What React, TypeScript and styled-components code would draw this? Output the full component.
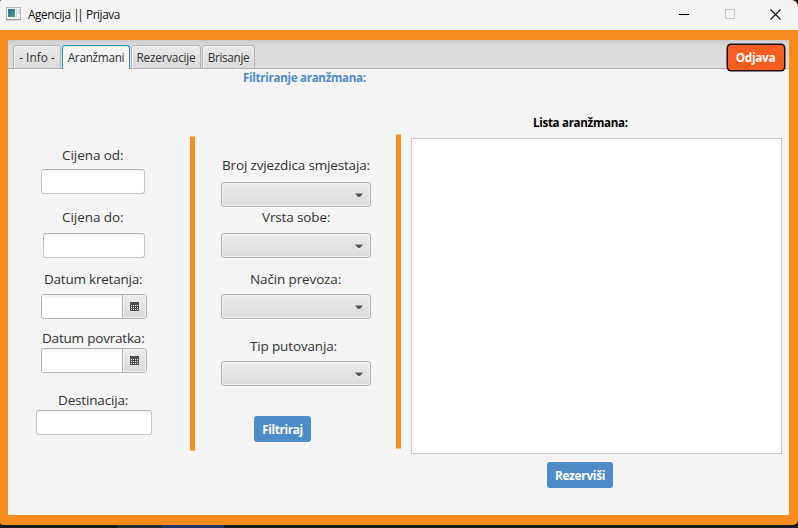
import React from "react";
import styled, { createGlobalStyle } from "styled-components";

const ORANGE = "#f78d1e";
const PANEL = "#f4f4f4";
const BLUE = "#4e8bc9";

const GlobalStyle = createGlobalStyle`
  * { box-sizing: border-box; }
  body { margin: 0; background: #17191f; }
  button { margin: 0; padding: 0; border: 0; font: inherit; }
`;

const Desktop = styled.div`
  width: 798px;
  height: 528px;
  overflow: hidden;
  background: linear-gradient(90deg, #17191f 0 117px, #252a33 117px 162px, #1f3563 162px 224px, #17191f 224px);
  font-family: "Open Sans", "Noto Sans", sans-serif;
`;

const Window = styled.div`
  display: flex;
  flex-direction: column;
  width: 798px;
  height: 525px;
  overflow: hidden;
  border-radius: 2px 7px 5px 3px;
  background: ${ORANGE};
`;

const TitleBar = styled.header`
  display: flex;
  align-items: center;
  flex: none;
  height: 30px;
  padding: 0 0 2px 6px;
  background: #f3f3f3;
`;

const Title = styled.h1`
  flex: 1;
  margin: 0 0 0 7px;
  color: #111;
  font-size: 11.8px;
  font-weight: 400;
  line-height: 18px;
  letter-spacing: -0.42px;
`;

const Bars = styled.span`
  letter-spacing: -2.4px;
  margin-right: 2px;
`;

const WindowControls = styled.div`
  display: flex;
`;

const ControlButton = styled.button`
  display: flex;
  align-items: center;
  justify-content: center;
  width: 46px;
  height: 28px;
  background: transparent;

  &:last-child {
    width: 45px;
  }
`;

const Client = styled.main`
  position: relative;
  display: flex;
  flex-direction: column;
  width: 781px;
  height: 475px;
  margin: 10px 0 0 8px;
  background: ${PANEL};
`;

const TabHeader = styled.nav`
  display: flex;
  align-items: flex-end;
  flex: none;
  gap: 1px;
  height: 29px;
  padding-left: 5px;
  background: linear-gradient(#cbcbcb 0, #dadada 5px, #dedede 100%);
  box-shadow: inset 0 -1px #b4b4b4;
`;

const Tab = styled.button<{ $width: number; $spacing: number; $active?: boolean }>`
  width: ${(p) => p.$width}px;
  height: 24px;
  border: 1px solid ${(p) => (p.$active ? "#159bc6" : "#b4b4b4")};
  border-bottom: ${(p) => (p.$active ? "0" : "1px solid #b4b4b4")};
  border-radius: 3px 3px 0 0;
  background: ${(p) => (p.$active ? PANEL : "linear-gradient(#eaeaea, #dadada)")};
  box-shadow: ${(p) => (p.$active ? "inset 0 1px #d5eaf1" : "inset 1px 1px #f4f4f4")};
  padding-bottom: ${(p) => (p.$active ? 1 : 0)}px;
  color: #333;
  font-size: 11.8px;
  line-height: 20px;
  letter-spacing: ${(p) => p.$spacing}px;
  white-space: nowrap;
`;

const LogoutButton = styled.button`
  position: absolute;
  top: 4px;
  right: 4px;
  width: 58px;
  height: 27px;
  border: 1px solid #1c0d08;
  border-radius: 4px;
  background: #f75c20;
  box-shadow: 0 0 0 0.5px #1c0d08;
  padding: 0 1px 1px 0;
  color: #fff;
  font-size: 11.8px;
  font-weight: 700;
  letter-spacing: -0.33px;
`;

const Content = styled.section`
  display: grid;
  grid-template-columns: 182px 5px 201px 5px 1fr;
  grid-template-rows: 18px 1fr;
  align-items: start;
  height: 446px;
`;

const FilterHeading = styled.h2`
  grid-column: 1 / 5;
  height: 18px;
  margin: 0 0 0 235px;
  color: ${BLUE};
  font-size: 11.6px;
  line-height: 17px;
  letter-spacing: -0.3px;
  white-space: nowrap;
`;

const Column = styled.div<{ $indent: number }>`
  grid-row: 2;
  display: flex;
  flex-direction: column;
  align-items: flex-start;
  padding-left: ${(p) => p.$indent}px;
`;

const Divider = styled.div<{ $top: number }>`
  grid-row: 2;
  height: 315px;
  margin-top: ${(p) => p.$top}px;
  background: linear-gradient(#f8ba78 1px, ${ORANGE} 1px 314px, #f8ba78 314px);
`;

const Label = styled.label<{ $x: number; $gap: number; $spacing: number }>`
  height: 20px;
  margin: ${(p) => p.$gap}px 0 0 ${(p) => p.$x}px;
  color: #333;
  font-size: 13.5px;
  line-height: 20px;
  letter-spacing: ${(p) => p.$spacing}px;
  white-space: nowrap;
`;

const TextInput = styled.input<{ $x: number; $gap: number; $width: number }>`
  width: ${(p) => p.$width}px;
  height: 25px;
  margin: ${(p) => p.$gap}px 0 1px ${(p) => p.$x}px;
  padding: 0 7px;
  border: 1px solid #c5c5c5;
  border-top-color: #b6b6b6;
  border-radius: 3px;
  background: linear-gradient(#f0f0f0, #fff 4px);
  outline: none;
`;

const DateField = styled.div<{ $gap: number }>`
  display: flex;
  width: 106px;
  height: 25px;
  margin: ${(p) => p.$gap}px 0 0 5px;
  border: 1px solid #b4b4b4;
  border-radius: 3px;
  overflow: hidden;
`;

const DateInput = styled.input`
  width: 80px;
  height: 23px;
  padding: 0 6px;
  border: 0;
  background: linear-gradient(#f0f0f0, #fff 4px);
  outline: none;
`;

const CalendarButton = styled.button`
  display: flex;
  align-items: center;
  justify-content: center;
  flex: 1;
  border-left: 1px solid #b4b4b4;
  background: linear-gradient(#ececec, #d9d9d9);
  box-shadow: inset 0 0 0 1px #f0f0f0;
`;

const ComboBox = styled.button<{ $gap: number }>`
  display: flex;
  align-items: center;
  justify-content: flex-end;
  width: 150px;
  height: 25px;
  margin-top: ${(p) => p.$gap}px;
  padding: 1px 7px 0 0;
  border: 1px solid #b4b4b4;
  border-radius: 3px;
  background: linear-gradient(#ececec, #d9d9d9);
  box-shadow: inset 0 0 0 1px #f0f0f0, 0 1px #f9f9f9;
`;

const ActionButton = styled.button<{ $x: number; $gap: number; $width: number; $spacing: number }>`
  width: ${(p) => p.$width}px;
  height: 26px;
  margin: ${(p) => p.$gap}px 0 0 ${(p) => p.$x}px;
  padding-bottom: 1px;
  border-radius: 3px;
  background: ${BLUE};
  color: #fff;
  font-size: 11.8px;
  font-weight: 700;
  letter-spacing: ${(p) => p.$spacing}px;
`;

const ListHeading = styled.h2`
  height: 20px;
  margin: 26px 0 0 122px;
  color: #000;
  font-size: 11.6px;
  line-height: 20px;
  letter-spacing: -0.32px;
  white-space: nowrap;
`;

const ListView = styled.div`
  width: 371px;
  height: 316px;
  margin-top: 5px;
  border: 1px solid #c8c8c8;
  background: #fff;
`;

const AppIcon = () => (
  <svg width="15" height="14" viewBox="0 0 15 14">
    <rect x="0.5" y="0.5" width="14" height="12" fill="#f0f2f4" stroke="#b4b9bd" />
    <path d="M0 12.8H15" stroke="#8f959a" />
    <defs>
      <linearGradient id="screen" x1="0" y1="0" x2="1" y2="1">
        <stop offset="0" stopColor="#2f689c" />
        <stop offset="1" stopColor="#4fa276" />
      </linearGradient>
    </defs>
    <rect x="2" y="2" width="7" height="8" fill="url(#screen)" />
    <rect x="10" y="2" width="1" height="8" fill="#cfd6dc" />
    <rect x="12" y="2" width="2" height="5" fill="#cfd9e1" />
  </svg>
);

const CalendarIcon = () => (
  <svg width="9" height="9" viewBox="0 0 9 9" shapeRendering="crispEdges">
    <rect width="9" height="9" fill="#4d4d4d" />
    {[3, 5, 7].map((y) =>
      [1, 3, 5, 7].map((x) => <rect key={`${x}-${y}`} x={x} y={y} width="1" height="1" fill="#f1f1f1" />)
    )}
  </svg>
);

const Arrow = () => (
  <svg width="8" height="5" viewBox="0 0 8 5">
    <path d="M0 0.5H8L5 4H3Z" fill="#555" />
    <path d="M3 4.4H5" stroke="#f6f6f6" strokeWidth="0.8" />
  </svg>
);

const DatePicker = ({ gap, name }: { gap: number; name: string }) => (
  <DateField $gap={gap}>
    <DateInput aria-label={name} />
    <CalendarButton>
      <CalendarIcon />
    </CalendarButton>
  </DateField>
);

const Combo = ({ gap }: { gap: number }) => (
  <ComboBox $gap={gap}>
    <Arrow />
  </ComboBox>
);

export default function App() {
  return (
    <Desktop>
      <GlobalStyle />
      <Window>
        <TitleBar>
          <AppIcon />
          <Title>Agencija <Bars>||</Bars> Prijava</Title>
          <WindowControls>
            <ControlButton>
              <svg width="10" height="10"><path d="M0 5.5H10" stroke="#000" /></svg>
            </ControlButton>
            <ControlButton>
              <svg width="10" height="10"><rect x="0.5" y="0.5" width="9" height="9" rx="0.5" fill="none" stroke="#c6c6c6" /></svg>
            </ControlButton>
            <ControlButton>
              <svg width="11" height="11"><path d="M0.5 0.5L10.5 10.5M10.5 0.5L0.5 10.5" stroke="#111" strokeWidth="1.1" /></svg>
            </ControlButton>
          </WindowControls>
        </TitleBar>
        <Client>
          <TabHeader>
            <Tab $width={48} $spacing={0.05}>- Info -</Tab>
            <Tab $width={68} $spacing={-0.3} $active>Aranžmani</Tab>
            <Tab $width={70} $spacing={-0.24}>Rezervacije</Tab>
            <Tab $width={53} $spacing={-0.34}>Brisanje</Tab>
          </TabHeader>
          <LogoutButton>Odjava</LogoutButton>
          <Content>
            <FilterHeading>Filtriranje aranžmana:</FilterHeading>
            <Column $indent={28}>
              <Label $x={26} $gap={58} $spacing={-0.06}>Cijena od:</Label>
              <TextInput $x={5} $gap={4} $width={104} />
              <Label $x={26} $gap={12} $spacing={-0.06}>Cijena do:</Label>
              <TextInput $x={7} $gap={6} $width={102} />
              <Label $x={8} $gap={10} $spacing={-0.22}>Datum kretanja:</Label>
              <DatePicker gap={5} name="Datum kretanja" />
              <Label $x={6} $gap={9} $spacing={-0.2}>Datum povratka:</Label>
              <DatePicker gap={0} name="Datum povratka" />
              <Label $x={22} $gap={17} $spacing={-0.16}>Destinacija:</Label>
              <TextInput $x={0} $gap={0} $width={116} />
            </Column>
            <Divider $top={49} />
            <Column $indent={26}>
              <Label $x={1} $gap={68} $spacing={-0.16}>Broj zvjezdica smjestaja:</Label>
              <Combo gap={7} />
              <Label $x={41} $gap={0} $spacing={-0.13}>Vrsta sobe:</Label>
              <Combo gap={6} />
              <Label $x={29} $gap={11} $spacing={-0.13}>Način prevoza:</Label>
              <Combo gap={5} />
              <Label $x={29} $gap={17} $spacing={-0.15}>Tip putovanja:</Label>
              <Combo gap={5} />
              <ActionButton $x={33} $gap={30} $width={57} $spacing={-0.36}>Filtriraj</ActionButton>
            </Column>
            <Divider $top={47} />
            <Column $indent={10}>
              <ListHeading>Lista aranžmana:</ListHeading>
              <ListView />
              <ActionButton $x={136} $gap={8} $width={66} $spacing={-0.27}>Rezerviši</ActionButton>
            </Column>
          </Content>
        </Client>
      </Window>
    </Desktop>
  );
}
